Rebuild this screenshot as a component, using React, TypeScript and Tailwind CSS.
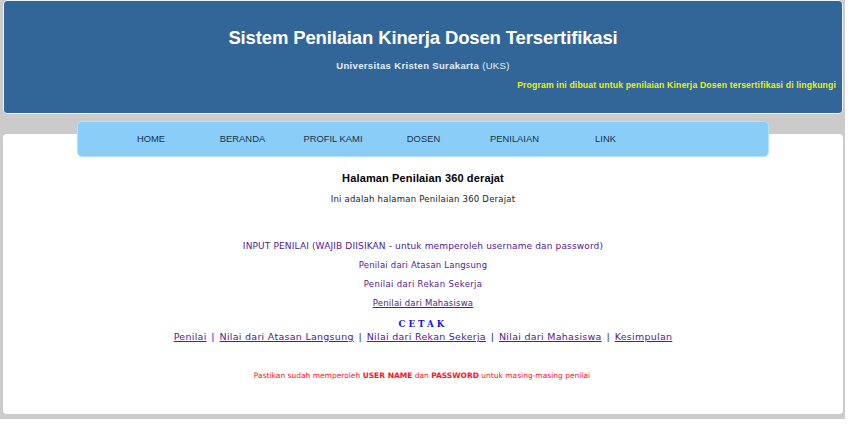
import React from 'react';

const menu = [
  { label: 'HOME', width: 'w-[92px]' },
  { label: 'BERANDA', width: 'w-[91px]' },
  { label: 'PROFIL KAMI', width: 'w-[90px]' },
  { label: 'DOSEN', width: 'w-[91px]' },
  { label: 'PENILAIAN', width: 'w-[91px]' },
  { label: 'LINK', width: 'w-[91px]' },
];

const reports = [
  'Penilai',
  'Nilai dari Atasan Langsung',
  'Nilai dari Rekan Sekerja',
  'Nilai dari Mahasiswa',
  'Kesimpulan',
];

const Header = () => (
  <header className="h-[114px] rounded-[4px] border border-[#eef3f7] bg-[#336698] text-center font-['Liberation_Sans',Arial,sans-serif] text-white">
    <h1 className="pt-[25px] text-[18.5px] leading-6 font-bold tracking-[-0.14px] whitespace-nowrap">Sistem Penilaian Kinerja Dosen Tersertifikasi</h1>
    <p className="mt-2 text-[9.5px] leading-4 tracking-[0.34px] whitespace-nowrap text-[#e6eef6]">
      <b>Universitas Kristen Surakarta</b> (UKS)
    </p>
    <p className="mt-[5px] pr-[6px] text-right text-[8.7px] leading-3 font-bold tracking-[0.13px] whitespace-nowrap text-[#e8f20c]">
      Program ini dibuat untuk penilaian Kinerja Dosen tersertifikasi di lingkungi
    </p>
  </header>
);

const Menu = () => (
  <nav className="relative mx-auto mt-[7px] flex h-[36px] w-[692px] items-center rounded-[5px] border border-[#b5dffa] bg-[#89cdf8] pl-[27px] font-['Liberation_Sans',Arial,sans-serif] text-[9.4px] text-[#173247]">
    {menu.map((m) => (
      <a key={m.label} href="#" className={`${m.width} text-center whitespace-nowrap`}>{m.label}</a>
    ))}
  </nav>
);

export default function App() {
  return (
    <div className="h-[426px] w-[853px] overflow-hidden bg-white">
      <div className="h-[419px] w-[845px] bg-[#cbcbcb] pr-[2px] pl-[3px]">
        <Header />
        <Menu />
        <main className="-mt-[23px] h-[280px] rounded-[4px] bg-white pt-[36px] text-center font-['DejaVu_Sans',Verdana,sans-serif] text-[8.5px] whitespace-nowrap text-[#551a8b]">
          <h2 className="font-['Liberation_Sans',Arial,sans-serif] text-[11px] leading-4 font-bold tracking-[0.14px] text-black">Halaman Penilaian 360 derajat</h2>
          <p className="mt-[5px] leading-4 tracking-[0.23px] text-[#222]">Ini adalah halaman Penilaian 360 Derajat</p>
          <p className="mt-[31px] text-[9px] leading-4 tracking-[0.14px]">INPUT PENILAI (WAJIB DIISIKAN - untuk memperoleh username dan password)</p>
          <p className="mt-[3px] leading-4 tracking-[0.2px]">Penilai dari Atasan Langsung</p>
          <p className="mt-[3px] leading-4 tracking-[0.33px]">Penilai dari Rekan Sekerja</p>
          <p className="mt-[3px] leading-4 tracking-[0.2px] underline">Penilai dari Mahasiswa</p>
          <p className="mt-[7px] font-['DejaVu_Serif',serif] text-[8.7px] leading-3 font-bold tracking-[3px] text-[#1414d8]">CETAK</p>
          <p className="flex justify-center text-[9.5px] leading-[14px] tracking-[0.27px]">
            {reports.map((r, i) => (
              <React.Fragment key={r}>
                {i > 0 && <span className="w-[13px] text-[#1414d8]">|</span>}
                <a href="#" className="underline">{r}</a>
              </React.Fragment>
            ))}
          </p>
          <p className="mt-[24px] pr-[2px] text-[7.5px] leading-4 text-[#fb1224]">
            Pastikan sudah memperoleh <b>USER NAME</b> dan <b>PASSWORD</b> untuk masing-masing penilai
          </p>
        </main>
      </div>
    </div>
  );
}
